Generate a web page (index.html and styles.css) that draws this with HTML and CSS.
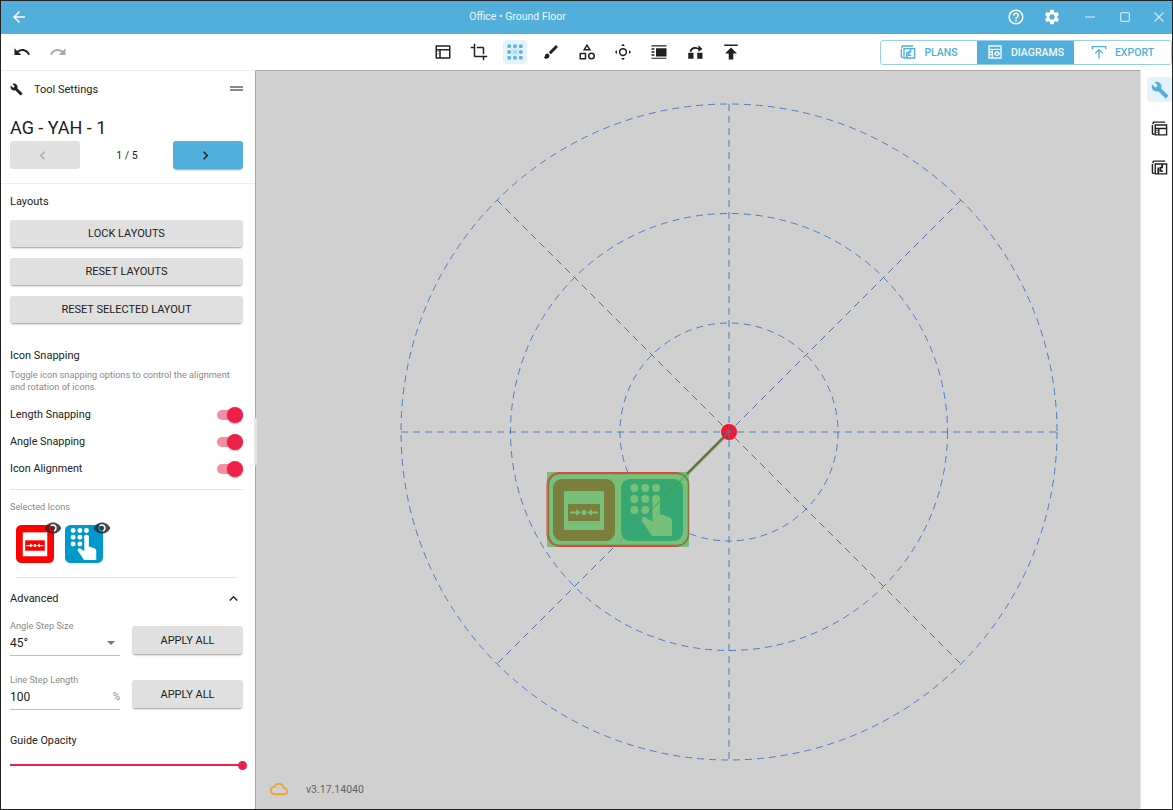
FILE: index.html
```html
<!DOCTYPE html>
<html lang="en">

<head>
    <meta charset="UTF-8">
    <title>Office • Ground Floor</title>
    <link rel="stylesheet" href="styles.css">
</head>

<body>
    <svg class="defs" width="0" height="0">
        <symbol id="i-wrench" viewBox="0 0 24 24"><path d="M22.7 19l-9.1-9.1c.9-2.3.4-5-1.5-6.9-2-2-5-2.4-7.4-1.3L9 6 6 9 1.6 4.7C.4 7.1.9 10.1 2.9 12.1c1.9 1.9 4.6 2.4 6.9 1.5l9.1 9.1c.4.4 1 .4 1.4 0l2.3-2.3c.5-.4.5-1.1.1-1.4z"/></symbol>
        <symbol id="i-left" viewBox="0 0 24 24"><path d="M15.41 7.41L14 6l-6 6 6 6 1.41-1.41L10.83 12z"/></symbol>
        <symbol id="i-right" viewBox="0 0 24 24"><path d="M10 6L8.59 7.41 13.17 12l-4.58 4.59L10 18l6-6z"/></symbol>
        <symbol id="i-eye" viewBox="0 0 24 24"><path d="M12 4.5C7 4.5 2.73 7.61 1 12c1.73 4.39 6 7.5 11 7.5s9.27-3.11 11-7.5c-1.73-4.39-6-7.5-11-7.5zM12 17c-2.76 0-5-2.24-5-5s2.24-5 5-5 5 2.24 5 5-2.24 5-5 5zm0-8c-1.66 0-3 1.34-3 3s1.34 3 3 3 3-1.34 3-3-1.34-3-3-3z"/></symbol>
        <symbol id="i-plan" viewBox="0 0 24 24"><path d="M4 2h16v2H4v2H2V4a2 2 0 0 1 2-2zM1 7h2v12h2v2H3a2 2 0 0 1-2-2z"/><path fill-rule="evenodd" d="M5 6h18v16H5zm2 2v12h2v-8h2.500v8H21V8h-4v5h-2.500v3H17v2h-5v-7h2.500V8zm10 0z"/></symbol>
        <symbol id="i-panels" viewBox="0 0 24 24"><path d="M4 2h16v2H4v2H2V4a2 2 0 0 1 2-2zM1 7h2v12h2v2H3a2 2 0 0 1-2-2z"/><path fill-rule="evenodd" d="M5 6h18v16H5zm2 2v3h14V8zm0 5v7h3v-7zm5 0v7h9v-7zM7.500 14h2v1.500h-2zm0 3h2v1.500h-2z"/></symbol>
        <symbol id="i-alarm" viewBox="0 0 62 62">
            <rect class="tile" width="62" height="62" rx="9"/>
            <rect class="mark" x="11" y="12" width="40" height="39"/>
            <rect class="tile" x="15" y="25" width="32" height="17"/>
            <path class="mark" d="M17 32.500h6v-2.300l5 3.300-5 3.300v-2.300h-6zM45 32.500h-6v-2.300l-5 3.300 5 3.300v-2.300h6z"/>
            <circle class="mark" cx="31" cy="33.500" r="2.500"/>
        </symbol>
        <symbol id="i-keypad" viewBox="0 0 62 62">
            <rect class="tile" width="62" height="62" rx="9"/>
            <g class="mark">
                <circle cx="13.300" cy="9" r="4"/><circle cx="24.300" cy="9" r="4"/><circle cx="35" cy="9" r="4"/>
                <circle cx="13.300" cy="20" r="4"/><circle cx="24.300" cy="20" r="4"/><circle cx="35" cy="20" r="4"/>
                <circle cx="13.300" cy="31" r="4"/><circle cx="24.300" cy="31" r="4"/>
                <path d="M31.500 21a3.700 3.700 0 0 1 7.400 0v14l9 3c2 .7 3.100 2.300 3.100 4.500V57H31L21 42c-1.400-2.600 1.400-5 4-3.600l6.500 4.600z"/>
            </g>
        </symbol>
    </svg>

    <div class="app">
        <header class="titlebar">
            <div class="back">
                <svg class="ic18" viewBox="0 0 24 24"><path d="M20 11H7.83l5.59-5.59L12 4l-8 8 8 8 1.41-1.41L7.83 13H20v-2z"/></svg>
            </div>
            <div class="apptitle">Office • Ground Floor</div>
            <div class="winbtns">
                <svg class="ic18" viewBox="0 0 24 24"><path d="M11 18h2v-2h-2v2zm1-16C6.48 2 2 6.48 2 12s4.48 10 10 10 10-4.48 10-10S17.52 2 12 2zm0 18c-4.41 0-8-3.59-8-8s3.59-8 8-8 8 3.59 8 8-3.59 8-8 8zm0-14c-2.210 0-4 1.790-4 4h2c0-1.100.9-2 2-2s2 .9 2 2c0 2-3 1.750-3 5h2c0-2.250 3-2.500 3-5 0-2.210-1.790-4-4-4z"/></svg>
                <svg class="ic18 gear" viewBox="0 0 24 24"><path d="M19.14 12.94c.04-.3.06-.61.06-.94 0-.32-.02-.64-.07-.94l2.03-1.58c.18-.14.23-.41.12-.61l-1.92-3.32c-.12-.22-.37-.29-.59-.22l-2.39.96c-.5-.38-1.03-.7-1.62-.94l-.36-2.54c-.04-.24-.24-.41-.48-.41h-3.84c-.24 0-.43.17-.47.41l-.36 2.54c-.59.24-1.13.57-1.62.94l-2.39-.96c-.22-.08-.47 0-.59.22L2.74 8.87c-.12.21-.08.47.12.61l2.03 1.58c-.05.3-.09.63-.09.94s.02.64.07.94l-2.03 1.58c-.18.14-.23.41-.12.61l1.92 3.32c.12.22.37.29.59.22l2.39-.96c.5.38 1.03.7 1.62.94l.36 2.54c.05.24.24.41.48.41h3.84c.24 0 .44-.17.47-.41l.36-2.54c.59-.24 1.13-.56 1.62-.94l2.39.96c.22.08.47 0 .59-.22l1.92-3.32c.12-.22.07-.47-.12-.61l-2.01-1.58zM12 15.6c-1.98 0-3.6-1.62-3.6-3.6s1.62-3.6 3.6-3.6 3.6 1.62 3.6 3.6-1.62 3.6-3.6 3.6z"/></svg>
                <svg class="winctl min" viewBox="0 0 10 10"><path d="M0 5h10"/></svg>
                <svg class="winctl max" viewBox="0 0 10 10"><rect x=".7" y=".7" width="8.600" height="8.600" rx="1"/></svg>
                <svg class="winctl close" viewBox="0 0 10 10"><path d="M.5.5l9 9M9.500.5l-9 9"/></svg>
            </div>
        </header>

        <div class="toolbar">
            <div class="history">
                <svg class="ic18" viewBox="0 0 24 24"><path d="M12.5 8c-2.65 0-5.05.99-6.9 2.6L2 7v9h9l-3.62-3.62c1.39-1.16 3.16-1.88 5.12-1.88 3.54 0 6.55 2.31 7.6 5.5l2.37-.78C21.08 11.03 17.15 8 12.5 8z"/></svg>
                <svg class="ic18 off" viewBox="0 0 24 24"><path d="M18.4 10.6C16.55 8.99 14.15 8 11.5 8c-4.65 0-8.58 3.03-9.96 7.22L3.9 16c1.05-3.19 4.05-5.5 7.6-5.500 1.950 0 3.730.72 5.120 1.880L13 16h9V7l-3.600 3.600z"/></svg>
            </div>
            <div class="tools">
                <div class="tool"><svg viewBox="0 0 24 24"><path fill-rule="evenodd" d="M3 3h18a1 1 0 0 1 1 1v16a1 1 0 0 1-1 1H3a1 1 0 0 1-1-1V4a1 1 0 0 1 1-1zm1 2v3h16V5zm0 5v9h3v-9zm5 0v9h11v-9zM5 11h1v1H5zm0 3h1v1H5z"/></svg></div>
                <div class="tool"><svg viewBox="0 0 24 24"><path d="M17 15h2V7c0-1.100-.9-2-2-2H9v2h8v8zM7 17V1H5v4H1v2h4v10c0 1.100.9 2 2 2h10v4h2v-4h4v-2H7z"/></svg></div>
                <div class="tool active">
                    <svg viewBox="0 0 24 24">
                        <path class="rays" d="M12 7v10M7 12h10M7 7l10 10M17 7L7 17"/>
                        <g class="dots">
                            <rect x="2" y="2" width="4.500" height="4.500"/><rect x="9.750" y="2" width="4.500" height="4.500"/><rect x="17.500" y="2" width="4.500" height="4.500"/>
                            <rect x="2" y="9.750" width="4.500" height="4.500"/><rect x="17.500" y="9.750" width="4.500" height="4.500"/>
                            <rect x="2" y="17.500" width="4.500" height="4.500"/><rect x="9.750" y="17.500" width="4.500" height="4.500"/><rect x="17.500" y="17.500" width="4.500" height="4.500"/>
                        </g>
                    </svg>
                </div>
                <div class="tool"><svg viewBox="0 0 24 24"><path d="M7 14c-1.660 0-3 1.340-3 3 0 1.310-1.160 2-2 2 .92 1.220 2.490 2 4 2 2.210 0 4-1.790 4-4 0-1.660-1.340-3-3-3zm13.710-9.370l-1.340-1.340c-.39-.39-1.020-.39-1.410 0L9 12.250 11.750 15l8.960-8.960c.39-.39.39-1.030 0-1.410z"/></svg></div>
                <div class="tool"><svg viewBox="0 0 24 24"><path fill-rule="evenodd" d="M12 1l5.500 9h-11zm0 3.800L10 8h4zM2 13h9v9H2zm2 2v5h5v-5zM18 12.500a4.750 4.750 0 1 1 0 9.500 4.750 4.750 0 0 1 0-9.500zm0 2a2.750 2.750 0 1 0 0 5.500 2.750 2.750 0 0 0 0-5.500z"/></svg></div>
                <div class="tool"><svg viewBox="0 0 24 24"><path fill-rule="evenodd" d="M12 6.500a5.500 5.500 0 1 1 0 11 5.500 5.500 0 0 1 0-11zm0 2a3.500 3.500 0 1 0 0 7 3.500 3.500 0 0 0 0-7zM12 1l2.500 3h-5zM12 23l-2.500-3h5zM1 12l3-2.500v5zM23 12l-3 2.500v-5z"/></svg></div>
                <div class="tool"><svg viewBox="0 0 24 24"><path d="M2 3h20v1.500H2zM8 7h14v11H8zM2 7h4v2H2zM2 11h4v2H2zM2 15h4v2H2zM2 19.500h20V21H2z"/></svg></div>
                <div class="tool"><svg viewBox="0 0 24 24"><path d="M3 13h7v8H3zM15 13h7v8h-7z"/><path d="M5 11.500C5 6 12 3.500 16.500 6.500V3l5.500 5-5.500 3.500V9C13 6.500 8 8 7.500 11.500z"/></svg></div>
                <div class="tool"><svg viewBox="0 0 24 24"><path d="M3 2h18v2H3zM12 6l8 8h-5v8H9v-8H4z"/></svg></div>
            </div>
            <div class="tabs">
                <div class="tab"><svg viewBox="0 0 24 24"><use href="#i-plan"/></svg>PLANS</div>
                <div class="tab on">
                    <svg viewBox="0 0 24 24"><path fill-rule="evenodd" d="M2 2h20v20H2zm2 2v3h16V4zm0 5v2h3V9zm0 4v2h3v-2zm0 4v3h3v-3zm5-8v11h11V9zm6 2c2.500 0 4 2 4.500 3.500-.5 1.500-2 3.500-4.500 3.500s-4-2-4.500-3.500c.5-1.500 2-3.500 4.500-3.500zm0 2a1.500 1.500 0 1 0 0 3 1.500 1.500 0 0 0 0-3z"/></svg>DIAGRAMS
                </div>
                <div class="tab"><svg viewBox="0 0 24 24"><path d="M1 3h22v5h-2V5H3v3H1zM11 22V10.800l-4 4L5.600 13.400 12 7l6.400 6.400-1.400 1.400-4-4V22z"/></svg>EXPORT</div>
            </div>
        </div>

        <div class="main">
            <aside class="panel">
                <div class="panelhead">
                    <svg class="ic12"><use href="#i-wrench"/></svg>
                    <span class="panelname">Tool Settings</span>
                    <span class="grip"></span>
                </div>

                <div class="pager">
                    <div class="itemname">AG - YAH - 1</div>
                    <div class="pagerrow">
                        <div class="btn pagebtn"><svg class="ic16 off"><use href="#i-left"/></svg></div>
                        <div class="pagecount">1 / 5</div>
                        <div class="btn pagebtn blue"><svg class="ic16"><use href="#i-right"/></svg></div>
                    </div>
                </div>

                <section class="layouts">
                    <div class="heading">Layouts</div>
                    <div class="btn wide raised">LOCK LAYOUTS</div>
                    <div class="btn wide raised">RESET LAYOUTS</div>
                    <div class="btn wide raised">RESET SELECTED LAYOUT</div>
                </section>

                <section class="snapping">
                    <div class="heading">Icon Snapping</div>
                    <p class="hint">Toggle icon snapping options to control the alignment and rotation of icons.</p>
                    <div class="switchrow">Length Snapping<span class="switch"></span></div>
                    <div class="switchrow">Angle Snapping<span class="switch"></span></div>
                    <div class="switchrow">Icon Alignment<span class="switch"></span></div>
                </section>

                <section class="selected">
                    <div class="caption">Selected Icons</div>
                    <div class="iconlist">
                        <div class="selicon red">
                            <svg class="tileicon"><use href="#i-alarm"/></svg>
                            <svg class="eye"><use href="#i-eye"/></svg>
                        </div>
                        <div class="selicon cyan">
                            <svg class="tileicon"><use href="#i-keypad"/></svg>
                            <svg class="eye"><use href="#i-eye"/></svg>
                        </div>
                    </div>
                </section>

                <section class="advanced">
                    <div class="advhead">
                        <span class="heading">Advanced</span>
                        <svg class="ic16" viewBox="0 0 24 24"><path d="M12 8l-6 6 1.410 1.410L12 10.830l4.590 4.580L18 14z"/></svg>
                    </div>
                    <div class="fieldrow">
                        <div class="field">
                            <div class="caption">Angle Step Size</div>
                            <div class="value">45°<span class="caret"></span></div>
                        </div>
                        <div class="btn apply raised">APPLY ALL</div>
                    </div>
                    <div class="fieldrow">
                        <div class="field">
                            <div class="caption">Line Step Length</div>
                            <div class="value">100<span class="unit">%</span></div>
                        </div>
                        <div class="btn apply raised">APPLY ALL</div>
                    </div>
                    <div class="guidelabel">Guide Opacity</div>
                    <div class="slider"><span class="thumb"></span></div>
                </section>
            </aside>

            <div class="canvas">
                <span class="handle"></span>
                <svg class="guides" viewBox="256 71 884 738">
                    <g class="ring">
                        <circle cx="729" cy="432" r="109"/>
                        <circle cx="729" cy="432" r="218.500"/>
                        <circle cx="729" cy="432" r="328"/>
                        <path d="M401 432H1057M729 104V760"/>
                    </g>
                    <path class="spoke" d="M497 200L961 664M961 200L497 664"/>
                    <rect class="pad" x="547" y="472" width="142" height="75"/>
                    <rect class="padred" x="547" y="472.500" width="141" height="74" rx="12"/>
                    <rect class="padline" x="548.500" y="473.500" width="140" height="72" rx="11"/>
                    <svg class="tinted-a" x="553" y="479" width="62" height="62"><use href="#i-alarm"/></svg>
                    <svg class="tinted-b" x="621" y="479" width="62" height="62"><use href="#i-keypad"/></svg>
                    <path class="spoke faint" d="M684 477L620 541"/>
                    <path class="leader-r" d="M729 432L687 474"/>
                    <path class="leader-g" d="M729 432L687 474"/>
                    <path class="leader-thin" d="M687 474L650 511"/>
                    <circle class="hub" cx="729" cy="432" r="8"/>
                    <path class="hubmark" d="M722 432H736M729 425V439M724 427L734 437M734 427L724 437"/>
                </svg>
                <div class="status">
                    <svg class="cloud" viewBox="0 0 24 24"><path d="M19.350 10.040C18.670 6.590 15.640 4 12 4 9.110 4 6.600 5.640 5.350 8.040 2.340 8.360 0 10.910 0 14c0 3.310 2.690 6 6 6h13c2.760 0 5-2.240 5-5 0-2.640-2.050-4.780-4.650-4.960zM19 18H6c-2.210 0-4-1.790-4-4s1.790-4 4-4h.71C7.370 7.690 9.480 6 12 6c3.040 0 5.500 2.460 5.500 5.500v.5H19c1.660 0 3 1.340 3 3s-1.340 3-3 3z"/></svg>
                    <span>v3.17.14040</span>
                </div>
            </div>

            <nav class="rail">
                <div class="railbtn active"><svg class="ic18"><use href="#i-wrench"/></svg></div>
                <div class="railbtn"><svg class="ic16"><use href="#i-panels"/></svg></div>
                <div class="railbtn"><svg class="ic16"><use href="#i-plan"/></svg></div>
            </nav>
        </div>
    </div>
</body>

</html>
```

FILE: styles.css
```css
* {
    box-sizing: border-box;
}

body {
    margin: 0;
    font-family: Roboto, "Liberation Sans", sans-serif;
    color: #212121;
    background: #fff;
}

.defs {
    position: absolute;
}

.app {
    width: 1173px;
    height: 810px;
    display: flex;
    flex-direction: column;
    border: 1px solid #222;
    overflow: hidden;
}

svg {
    display: block;
    fill: currentColor;
}

.ic12 {
    width: 13px;
    height: 13px;
}

.ic16 {
    width: 17px;
    height: 17px;
}

.ic18 {
    width: 18px;
    height: 18px;
}

.off {
    color: #a8a8a8;
}

/* title bar */
.titlebar {
    height: 33px;
    flex: none;
    display: flex;
    align-items: center;
    padding-bottom: 2px;
    background: #52aedb;
    color: #fff;
}

.back {
    width: 34px;
    padding-left: 9px;
}

.apptitle {
    flex: 1;
    text-align: center;
    font-size: 10.500px;
    color: #eef7fc;
}

.winbtns {
    width: 172px;
    display: flex;
    align-items: center;
    padding-left: 7px;
}

.gear {
    margin-left: 18px;
}

.winctl {
    width: 10px;
    height: 10px;
    fill: none;
    stroke: #cfe8f5;
    stroke-width: 1.2;
}

.min {
    margin-left: 24px;
}

.max {
    margin-left: 25px;
}

.close {
    margin-left: 24px;
}

/* toolbar */
.toolbar {
    height: 36px;
    flex: none;
    display: grid;
    grid-template-columns: 1fr auto 1fr;
    align-items: center;
    background: #fff;
}

.history {
    display: flex;
    gap: 18px;
    padding-left: 12px;
}

.tools {
    display: flex;
    gap: 12px;
    padding-left: 1px;
}

.tool {
    width: 24px;
    height: 24px;
    display: flex;
    align-items: center;
    justify-content: center;
    border-radius: 4px;
}

.tool svg {
    width: 18px;
    height: 18px;
}

.tool.active {
    background: #e3f2fb;
}

.dots {
    fill: #52aedb;
}

.rays {
    fill: none;
    stroke: #8ccbea;
    stroke-width: 1;
}

.tabs {
    justify-self: end;
    width: 292px;
    height: 25px;
    display: grid;
    grid-template-columns: 96px 97px 97px;
    border: 1px solid #9bd0ea;
    border-radius: 3px;
}

.tab {
    display: flex;
    align-items: center;
    justify-content: center;
    gap: 8px;
    font-size: 10.500px;
    font-weight: 500;
    color: #52aedb;
}

.tab svg {
    width: 16px;
    height: 16px;
}

.tab.on {
    background: #52aedb;
    color: #f2fafd;
}

/* layout */
.main {
    flex: 1;
    display: flex;
    min-height: 0;
}

.panel {
    width: 255px;
    flex: none;
    background: #fff;
    border-top: 1px solid #eee;
    border-right: 1px solid #a8a8a8;
}

.canvas {
    position: relative;
    flex: 1;
    background: #d0d0d0;
    border-top: 1px solid #a8a8a8;
}

.guides {
    width: 884px;
    height: 738px;
}

.rail {
    width: 32px;
    flex: none;
    display: flex;
    flex-direction: column;
    align-items: flex-end;
    padding: 7px 0 0;
    gap: 14px;
    background: #fff;
    border-left: 1px solid #e6e6e6;
}

.railbtn {
    width: 25px;
    height: 25px;
    display: flex;
    align-items: center;
    justify-content: center;
    border-radius: 4px;
}

.railbtn.active {
    background: #e3f2fb;
    color: #52aedb;
}

/* panel */
.panelhead {
    display: flex;
    align-items: center;
    height: 36px;
    padding: 0 12px 0 9px;
}

.panelname {
    flex: 1;
    margin-left: 11px;
    font-size: 11px;
    font-weight: 400;
}

.grip {
    width: 13px;
    height: 5px;
    border-top: 2px solid #8a8a8a;
    border-bottom: 2px solid #8a8a8a;
    margin-top: -2px;
}

.pager {
    height: 77px;
    padding: 10px 12px 0 9px;
    border-bottom: 1px solid #eee;
}

.itemname {
    font-size: 18px;
    line-height: 21px;
}

.pagerrow {
    display: flex;
    align-items: center;
    justify-content: space-between;
    margin-top: 3px;
}

.btn {
    display: flex;
    align-items: center;
    justify-content: center;
    background: #e0e0e0;
    border-radius: 3px;
    font-size: 11px;
    font-weight: 400;
    color: #212121;
}

.raised {
    box-shadow: 0 2px 2px -1px rgba(0, 0, 0, .4);
}

.pagebtn {
    width: 70px;
    height: 28px;
    padding-right: 5px;
}

.blue {
    background: #52aedb;
    box-shadow: 0 2px 2px -1px rgba(0, 0, 0, .4);
}

.pagecount {
    font-size: 10.500px;
    margin: 1px 0 0 1px;
}

.layouts {
    padding: 0 12px 0 9px;
    height: 157px;
}

.heading {
    font-size: 11px;
    font-weight: 400;
    line-height: 13px;
}

.layouts .heading {
    padding-top: 11px;
    height: 36px;
}

.wide {
    height: 27px;
    margin-bottom: 11px;
}

.snapping {
    padding: 8px 12px 0 9px;
    height: 148px;
}

.hint {
    margin: 7px 0 8px;
    font-size: 9.200px;
    line-height: 12px;
    color: #8a8a8a;
}

.switchrow {
    height: 27px;
    display: flex;
    align-items: center;
    justify-content: space-between;
    font-size: 10.800px;
}

.switch {
    position: relative;
    width: 26px;
    height: 10px;
    border-radius: 5px;
    background: #f58da3;
}

.switch::after {
    content: "";
    position: absolute;
    right: 0;
    top: -3px;
    width: 16px;
    height: 16px;
    border-radius: 50%;
    background: #ee2049;
    box-shadow: 0 1px 2px rgba(0, 0, 0, .3);
}

.selected {
    margin: 0 12px 0 9px;
    height: 88px;
    border-top: 1px solid #e6e6e6;
    padding-top: 11px;
}

.caption {
    font-size: 9.200px;
    line-height: 11px;
    color: #8a8a8a;
}

.iconlist {
    display: flex;
    gap: 12px;
    margin-top: 13px;
    padding-left: 6px;
}

.selicon {
    position: relative;
    width: 37px;
    height: 38px;
}

.tileicon {
    width: 38px;
    height: 38px;
}

.red {
    --tile: #ff0000;
    --mark: #fff;
}

.cyan {
    --tile: #0099cc;
    --mark: #fff;
}

.tile {
    fill: var(--tile);
}

.mark {
    fill: var(--mark);
}

.eye {
    position: absolute;
    right: -9px;
    top: -6px;
    width: 18px;
    height: 18px;
    color: rgba(40, 40, 40, .85);
}

.advanced {
    padding: 0 12px 0 9px;
}

.advhead {
    position: relative;
    display: flex;
    align-items: center;
    justify-content: space-between;
    height: 20px;
    margin: 11px 0 11px;
    padding-right: 1px;
}

.advhead::before {
    content: "";
    position: absolute;
    left: 6px;
    right: 6px;
    top: -11px;
    border-top: 1px solid #e6e6e6;
}

.fieldrow {
    display: flex;
    justify-content: space-between;
    height: 54px;
}

.field {
    width: 110px;
    height: 37px;
    border-bottom: 1px solid #bdbdbd;
    padding-top: 1px;
}

.value {
    display: flex;
    align-items: center;
    justify-content: space-between;
    font-size: 12px;
    line-height: 24px;
}

.caret {
    width: 0;
    height: 0;
    margin-right: 5px;
    border-left: 4px solid transparent;
    border-right: 4px solid transparent;
    border-top: 4px solid #757575;
}

.unit {
    font-size: 10px;
    color: #8a8a8a;
}

.apply {
    width: 111px;
    height: 28px;
    margin-top: 7px;
}

.guidelabel {
    font-size: 10.800px;
    line-height: 13px;
    margin-top: 7px;
}

.slider {
    position: relative;
    height: 2px;
    margin-top: 17px;
    background: #ee2049;
}

.thumb {
    position: absolute;
    right: -4px;
    top: -3.500px;
    width: 9px;
    height: 9px;
    border-radius: 50%;
    background: #ee2049;
}

/* canvas drawing */
.ring {
    fill: none;
    stroke: #4a7cc8;
    stroke-width: 1;
    stroke-dasharray: 7 5;
}

.spoke {
    fill: none;
    stroke: #4d6d9f;
    stroke-width: 1;
    stroke-dasharray: 7 5;
}

.faint {
    opacity: .35;
}

.pad {
    fill: #78c07a;
}

.padred {
    fill: none;
    stroke: #e2453f;
    stroke-width: 1;
}

.padline {
    fill: #78c07a;
    stroke: #86753f;
    stroke-width: 1.500;
}

.tinted-a {
    --tile: #7b7f3d;
    --mark: #78c07a;
}

.tinted-b {
    --tile: #36a972;
    --mark: #78c07a;
}

.leader-r {
    stroke: #b8443a;
    stroke-width: 2.500;
}

.leader-g {
    stroke: #2f9a3f;
    stroke-width: 1;
}

.leader-thin {
    stroke: #3f9f45;
    stroke-width: 1;
}

.hub {
    fill: #f8131f;
}

.hubmark {
    fill: none;
    stroke: #5c6fb0;
    stroke-width: .8;
}

.handle {
    position: absolute;
    left: -2px;
    top: 347px;
    width: 3px;
    height: 47px;
    background: #e4e4e4;
}

.status {
    position: absolute;
    left: 14px;
    bottom: 11px;
    display: flex;
    align-items: center;
    gap: 18px;
    font-size: 10.500px;
    color: #616161;
}

.cloud {
    width: 18px;
    height: 18px;
    fill: #f39c1f;
}
```
